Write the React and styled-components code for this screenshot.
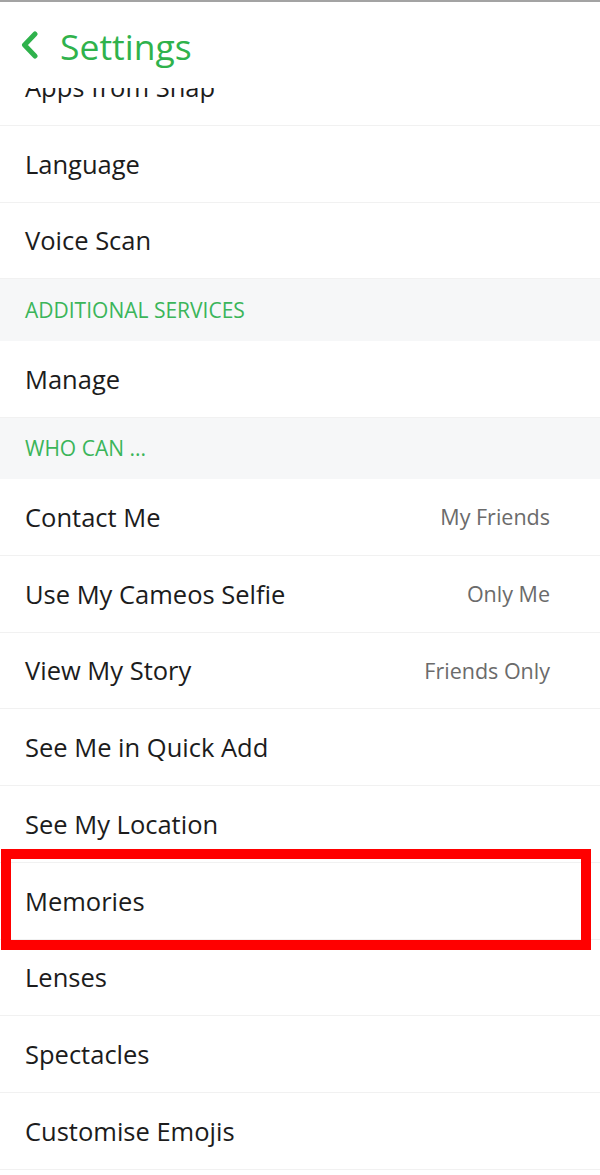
import React from 'react';
import styled, { createGlobalStyle } from 'styled-components';

const GlobalStyle = createGlobalStyle`
    html, body {
        margin: 0;
        padding: 0;
        background: #ffffff;
    }
    body {
        font-family: "Open Sans", "Noto Sans", sans-serif;
        -webkit-font-smoothing: antialiased;
    }
`;

const Tela = styled.div`
    position: relative;
    width: 600px;
    height: 1175px;
    overflow: hidden;
    background: #ffffff;
    border-top: 2px solid #a3a3a3;
    box-sizing: border-box;
`;

const Cabecalho = styled.header`
    position: absolute;
    top: 0;
    left: 0;
    right: 0;
    height: 86px;
    display: flex;
    align-items: center;
    gap: 21px;
    padding-left: 20px;
    background: #ffffff;
    z-index: 2;
`;

const Titulo = styled.h1`
    margin: 0 0 -2px;
    font-size: 35.5px;
    font-weight: 400;
    color: #2fb24c;
`;

const Lista = styled.div`
    display: flex;
    flex-direction: column;
    margin-top: 47px;
`;

const Linha = styled.div`
    display: flex;
    align-items: center;
    justify-content: space-between;
    height: 76.75px;
    box-sizing: border-box;
    padding: 0 50px 0 25px;
    border-bottom: 1px solid #f1f1f1;
    background: #ffffff;
`;

const Rotulo = styled.span`
    font-size: 25.5px;
    color: #1c1c1c;
`;

const Valor = styled.span`
    font-size: 21.5px;
    color: #6b6b6b;
`;

const Secao = styled.div`
    display: flex;
    align-items: center;
    height: 61.5px;
    box-sizing: border-box;
    padding-left: 25px;
    background: #f6f7f8;
    font-size: 21px;
    color: #3bb55a;
`;

const Destaque = styled.div`
    position: absolute;
    left: 1px;
    top: 847px;
    width: 590px;
    height: 101px;
    border: 10px solid #ff0000;
    box-sizing: border-box;
    pointer-events: none;
`;

function Voltar() {
    return (
        <svg width="19" height="28" viewBox="0 0 19 28">
            <path d="M15 3 L4.5 14 L15 25" fill="none" stroke="#2fb24c" strokeWidth="5" strokeLinecap="round" strokeLinejoin="round" />
        </svg>
    );
}

const itens = [
    { tipo: 'linha', texto: 'Apps from Snap' },
    { tipo: 'linha', texto: 'Language' },
    { tipo: 'linha', texto: 'Voice Scan' },
    { tipo: 'secao', texto: 'ADDITIONAL SERVICES' },
    { tipo: 'linha', texto: 'Manage' },
    { tipo: 'secao', texto: 'WHO CAN ...' },
    { tipo: 'linha', texto: 'Contact Me', valor: 'My Friends' },
    { tipo: 'linha', texto: 'Use My Cameos Selfie', valor: 'Only Me' },
    { tipo: 'linha', texto: 'View My Story', valor: 'Friends Only' },
    { tipo: 'linha', texto: 'See Me in Quick Add' },
    { tipo: 'linha', texto: 'See My Location' },
    { tipo: 'linha', texto: 'Memories' },
    { tipo: 'linha', texto: 'Lenses' },
    { tipo: 'linha', texto: 'Spectacles' },
    { tipo: 'linha', texto: 'Customise Emojis' },
];

export default function App() {
    return (
        <>
            <GlobalStyle />
            <Tela>
                <Cabecalho>
                    <Voltar />
                    <Titulo>Settings</Titulo>
                </Cabecalho>
                <Lista>
                    {itens.map((item, index) => (
                        item.tipo === 'secao' ? (
                            <Secao key={index}>{item.texto}</Secao>
                        ) : (
                            <Linha key={index}>
                                <Rotulo>{item.texto}</Rotulo>
                                {item.valor && <Valor>{item.valor}</Valor>}
                            </Linha>
                        )
                    ))}
                </Lista>
                <Destaque />
            </Tela>
        </>
    );
}
